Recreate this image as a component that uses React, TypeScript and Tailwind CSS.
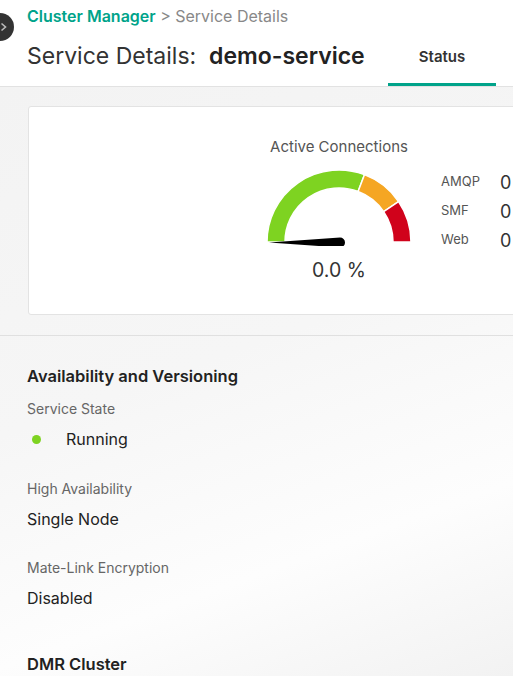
import React from 'react';

const font = { fontFamily: 'Inter, "Noto Sans", sans-serif' };

function Gauge() {
  // semicircle gauge, center (80,80), outer r 72, inner r 54
  const cx = 80;
  const cy = 80;
  const ro = 72;
  const ri = 54;
  const pt = (r: number, frac: number) => {
    const a = Math.PI * (1 - frac);
    return [cx + r * Math.cos(a), cy - r * Math.sin(a)];
  };
  const seg = (a: number, b: number) => {
    const [x1, y1] = pt(ro, a);
    const [x2, y2] = pt(ro, b);
    const [x3, y3] = pt(ri, b);
    const [x4, y4] = pt(ri, a);
    return `M${x1} ${y1} A${ro} ${ro} 0 0 1 ${x2} ${y2} L${x3} ${y3} A${ri} ${ri} 0 0 0 ${x4} ${y4} Z`;
  };
  return (
    <svg width="160" height="84" viewBox="0 0 160 84">
      <path d={seg(0, 0.615)} fill="#7ed321" stroke="#fff" strokeWidth="1.5" />
      <path d={seg(0.615, 0.81)} fill="#f5a623" stroke="#fff" strokeWidth="1.5" />
      <path d={seg(0.81, 1)} fill="#d0021b" stroke="#fff" strokeWidth="1.5" />
      <path d="M10 80.5 L81 75.5 A5 5 0 0 1 81 85.5 Z" fill="#000" />
    </svg>
  );
}

function Field({ label, children }: { label: string; children: React.ReactNode }) {
  return (
    <div className="mb-[28px]">
      <div className="text-[14px] text-[#666] leading-5">{label}</div>
      <div className="mt-[8px] text-[16px] text-[#222] leading-6">{children}</div>
    </div>
  );
}

export default function App() {
  return (
    <div className="w-[513px] h-[676px] overflow-hidden relative" style={font}>
      <div className="absolute -left-[14px] top-[13px] w-[28px] h-[28px] rounded-full bg-[#333] flex items-center justify-end pr-[6px]">
        <svg width="8" height="10" viewBox="0 0 8 10">
          <path d="M1.5 1.5 L5.5 5 L1.5 8.5" fill="none" stroke="#bbb" strokeWidth="1.6" />
        </svg>
      </div>

      <header className="h-[87px] bg-white border-b border-[#e2e2e2] pl-[27px] flex">
        <div className="flex-1 pt-[4px]">
          <div className="text-[16px] leading-6">
            <span className="text-[#00a38a] font-semibold">Cluster Manager</span>
            <span className="text-[#888]"> &gt; Service Details</span>
          </div>
          <div className="mt-[12px] text-[23px] leading-8 text-[#333]">
            Service Details:&nbsp; <span className="font-semibold text-[#222]">demo-service</span>
          </div>
        </div>
        <div className="w-[108px] mr-[17px] flex flex-col">
          <div className="flex-1 flex items-center justify-center pt-[32px] text-[15px] font-semibold text-[#333]">
            Status
          </div>
          <div className="h-[3px] bg-[#00a38a]" />
        </div>
      </header>

      <main className="bg-[linear-gradient(160deg,#f3f3f3_0%,#f6f6f6_45%,#fdfdfd_75%,#f2f2f2_100%)] h-[589px]">
        <div className="pt-[19px] pb-[20px] border-b border-[#e0e0e0]">
          <div className="ml-[28px] w-[700px] h-[209px] bg-white border border-[#e3e3e3] rounded-[3px] flex pl-[238px] pt-[30px]">
            <div className="w-[144px] flex flex-col items-center">
              <div className="text-[15px] text-[#555] leading-5 whitespace-nowrap">Active Connections</div>
              <div className="mt-[5px] -ml-[1px]">
                <Gauge />
              </div>
              <div className="mt-[12px] text-[19.5px] text-[#333] leading-6">0.0 %</div>
            </div>
            <div className="ml-[30px] pt-[34px] flex flex-col gap-[7px]">
              {['AMQP', 'SMF', 'Web'].map((k) => (
                <div key={k} className="flex items-center h-[22px]">
                  <span className="w-[59px] text-[13px] text-[#555]">{k}</span>
                  <span className="text-[18px] text-[#333]">0</span>
                </div>
              ))}
            </div>
          </div>
        </div>

        <section className="pl-[27px] pt-[28px]">
          <h2 className="text-[16.5px] font-semibold text-[#222] leading-6 mb-[11px]">Availability and Versioning</h2>
          <Field label="Service State">
            <span className="flex items-center">
              <span className="ml-[5px] w-[9px] h-[9px] rounded-full bg-[#7ed321]" />
              <span className="ml-[25px]">Running</span>
            </span>
          </Field>
          <Field label="High Availability">Single Node</Field>
          <div className="-mt-[1px]">
            <Field label="Mate-Link Encryption">Disabled</Field>
          </div>
          <h2 className="mt-[42px] text-[16.5px] font-semibold text-[#222] leading-6">DMR Cluster</h2>
        </section>
      </main>
    </div>
  );
}
